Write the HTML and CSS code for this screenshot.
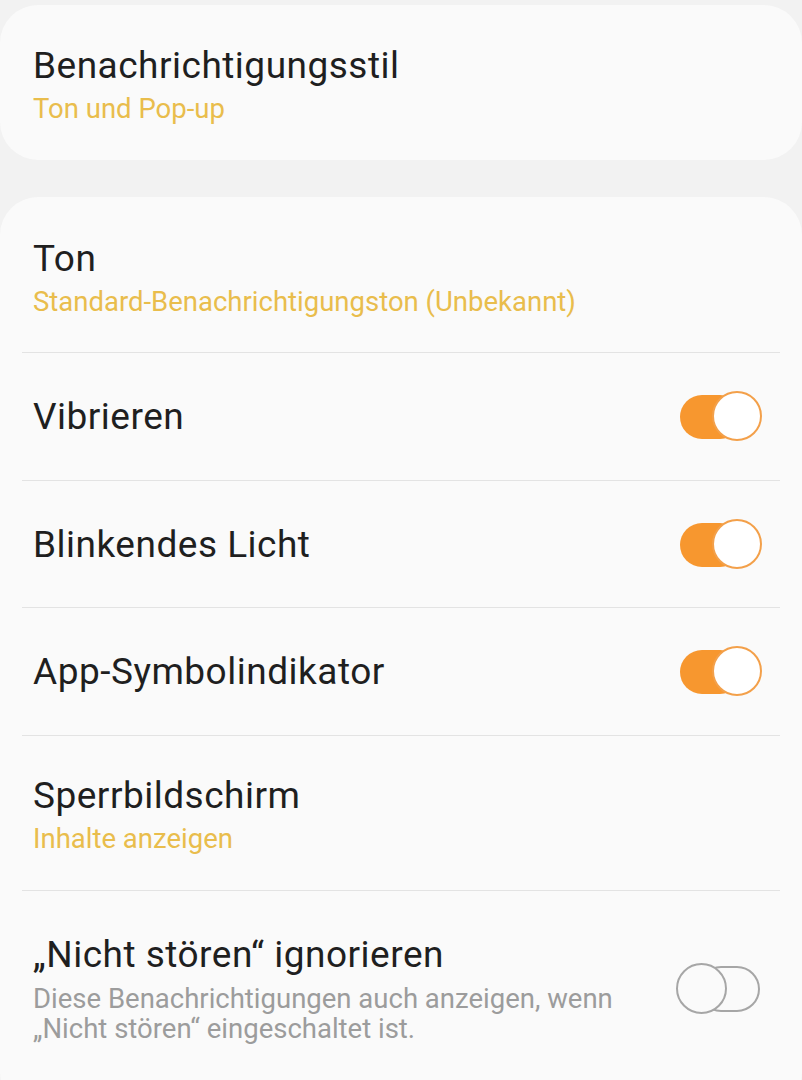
FILE: index.html
```html
<!DOCTYPE html>
<html lang="de">
<head>
    <meta charset="UTF-8">
    <meta name="viewport" content="width=device-width, initial-scale=1.0">
    <title>Benachrichtigungen</title>
    <link rel="stylesheet" href="styles.css">
</head>
<body>
    <div class="card card-top">
        <div class="row">
            <div class="text">
                <div class="title">Benachrichtigungsstil</div>
                <div class="sub">Ton und Pop-up</div>
            </div>
        </div>
    </div>

    <div class="card">
        <div class="row two-line">
            <div class="text">
                <div class="title">Ton</div>
                <div class="sub">Standard-Benachrichtigungston (Unbekannt)</div>
            </div>
        </div>

        <div class="row">
            <div class="text">
                <div class="title">Vibrieren</div>
            </div>
            <div class="switch on"><span class="track"></span><span class="thumb"></span></div>
        </div>

        <div class="row">
            <div class="text">
                <div class="title">Blinkendes Licht</div>
            </div>
            <div class="switch on"><span class="track"></span><span class="thumb"></span></div>
        </div>

        <div class="row">
            <div class="text">
                <div class="title">App-Symbolindikator</div>
            </div>
            <div class="switch on"><span class="track"></span><span class="thumb"></span></div>
        </div>

        <div class="row two-line">
            <div class="text">
                <div class="title">Sperrbildschirm</div>
                <div class="sub">Inhalte anzeigen</div>
            </div>
        </div>

        <div class="row last">
            <div class="text narrow">
                <div class="title">„Nicht stören“ ignorieren</div>
                <div class="desc">Diese Benachrichtigungen auch anzeigen, wenn „Nicht stören“ eingeschaltet ist.</div>
            </div>
            <div class="switch"><span class="track"></span><span class="thumb"></span></div>
        </div>
    </div>
</body>
</html>
```

FILE: styles.css
```css
body {
    margin: 0;
    background-color: #f2f2f2;
    font-family: Roboto, "Noto Sans", sans-serif;
    color: #1f1f1f;
}

.card {
    background-color: #fafafa;
    border-radius: 38px;
    padding: 0 22px;
}

.card-top {
    margin-top: 5px;
    margin-bottom: 37px;
}

.card-top .row {
    border-bottom: none;
}

.row {
    display: flex;
    align-items: center;
    justify-content: space-between;
    box-sizing: border-box;
    height: 127.5px;
    padding: 2px 18px 0 11px;
    border-bottom: 1.5px solid #e3e3e3;
}

.row.two-line,
.card-top .row {
    height: 155px;
    padding-top: 6px;
}

.row.two-line:first-child {
    height: 156px;
    padding-top: 7px;
}

.row.last {
    border-bottom: none;
    height: 220px;
    align-items: flex-start;
    padding-top: 41px;
}

.row.last .switch {
    margin-top: 31px;
}

.title {
    font-size: 37px;
    line-height: 46px;
    letter-spacing: 0.5px;
}

.sub {
    font-size: 27.5px;
    line-height: 38px;
    margin-top: 1px;
    color: #e9bd4c;
}

.narrow {
    max-width: 620px;
}

.desc {
    font-size: 27.5px;
    line-height: 30px;
    color: #9c9c9c;
    margin-top: 6px;
}

/* Schalter */
.switch {
    position: relative;
    width: 86px;
    height: 52px;
    flex-shrink: 0;
}

.switch .track {
    position: absolute;
    top: 3px;
    right: 2px;
    width: 62px;
    height: 46px;
    border: 2px solid #a6a6a6;
    border-radius: 23px;
    box-sizing: border-box;
}

.switch .thumb {
    position: absolute;
    top: 0;
    left: 0;
    width: 51px;
    height: 51px;
    box-sizing: border-box;
    border: 2.5px solid #a6a6a6;
    border-radius: 50%;
    background-color: #fafafa;
}

.switch.on .track {
    left: 4px;
    right: auto;
    top: 4px;
    height: 44px;
    border: none;
    background-color: #f7972f;
}

.switch.on .thumb {
    left: auto;
    right: 0;
    width: 50px;
    height: 50px;
    border-color: #f3a04a;
    background-color: #fff;
}
```
